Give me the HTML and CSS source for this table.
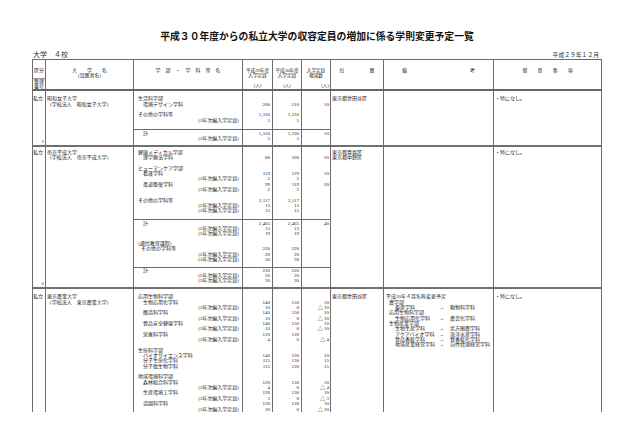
FILE: index.html
```html
<!DOCTYPE html>
<html lang="ja">
<head>
<meta charset="utf-8">
<title>学則変更予定一覧</title>
<link rel="stylesheet" href="styles.css">
</head>
<body>
<div class="page">
  <h1 class="title">平成３０年度からの私立大学の収容定員の増加に係る学則変更予定一覧</h1>
  <div class="meta"><span class="meta-l">大学　４校</span><span class="meta-r">平成２９年１２月</span></div>

  <div class="table">
    <!-- header -->
    <div class="grid head">
      <div class="c kh">
        <div class="kh-top">区分</div>
        <div class="kh-bot"><div>整理</div><div>番号</div></div>
      </div>
      <div class="c hc hc-top"><div class="l">大　　学　　名</div><div class="l">(設置者名)</div></div>
      <div class="c hc hc-top"><div class="l">学　部　・　学　科　等　名</div></div>
      <div class="c hc sm"><div><div class="l">平成29年度</div><div class="l">入学定員</div></div><div class="l">(人)</div></div>
      <div class="c hc sm"><div><div class="l">平成30年度</div><div class="l">入学定員</div></div><div class="l">(人)</div></div>
      <div class="c hc sm"><div><div class="l">入学定員</div><div class="l">増減数</div></div><div class="l unit-r">(人)</div></div>
      <div class="c hc hc-top"><div class="l">位　　　　　置</div></div>
      <div class="c hc bikou-h"><span>備</span><span>考</span></div>
      <div class="c hc hc-top"><div class="l">留　　意　　事　　項</div></div>
    </div>

    <!-- 1: 昭和女子大学 -->
    <div class="grid blk b1">
      <div class="c sp kb pa"><div class="l">私立</div><div class="l no">1</div></div>
      <div class="c sp univ pa"><div class="l">昭和女子大学</div><div class="l in2">(学校法人　昭和女子大学)</div></div>
      <div class="c dept r1 pa">
        <div class="l">生活科学部</div>
        <div class="l in">環境デザイン学科</div>
        <div class="l"></div>
        <div class="l">その他の学科等</div>
        <div class="l r">(3年次編入学定員)</div>
      </div>
      <div class="c num n29 r1 pa"><div class="l"></div><div class="l">200</div><div class="l"></div><div class="l">1,316</div><div class="l">5</div></div>
      <div class="c num n30 r1 pa"><div class="l"></div><div class="l">210</div><div class="l"></div><div class="l">1,316</div><div class="l">5</div></div>
      <div class="c diff r1 pa"><div class="l"></div><div class="l">10</div></div>
      <div class="c sp loc pa"><div class="l">東京都世田谷区</div></div>
      <div class="c sp note pa"></div>
      <div class="c sp memo pa"><div class="l">・特になし。</div></div>

      <div class="c dept r2 sub ps"><div class="l in">計</div><div class="l r">(3年次編入学定員)</div></div>
      <div class="c num n29 r2 sub ps"><div class="l">1,316</div><div class="l">5</div></div>
      <div class="c num n30 r2 sub ps"><div class="l">1,326</div><div class="l">5</div></div>
      <div class="c diff r2 sub ps"><div class="l">10</div></div>
    </div>

    <!-- 2: 帝京平成大学 -->
    <div class="grid blk b2">
      <div class="c sp kb pb"><div class="l">私立</div><div class="l no">2</div></div>
      <div class="c sp univ pb"><div class="l">帝京平成大学</div><div class="l in2">(学校法人　帝京平成大学)</div></div>
      <div class="c dept r1 pb">
        <div class="l">健康メディカル学部</div>
        <div class="l in">理学療法学科</div>
        <div class="l"></div>
        <div class="l">ヒューマンケア学部</div>
        <div class="l in">看護学科</div>
        <div class="l r">(3年次編入学定員)</div>
        <div class="l in">柔道整復学科</div>
        <div class="l r">(3年次編入学定員)</div>
        <div class="l"></div>
        <div class="l">その他の学科等</div>
        <div class="l r">(2年次編入学定員)</div>
        <div class="l r">(3年次編入学定員)</div>
      </div>
      <div class="c num n29 r1 pb"><div class="l"></div><div class="l">80</div><div class="l"></div><div class="l"></div><div class="l">119</div><div class="l">2</div><div class="l">99</div><div class="l">2</div><div class="l"></div><div class="l">2,117</div><div class="l">13</div><div class="l">15</div></div>
      <div class="c num n30 r1 pb"><div class="l"></div><div class="l">100</div><div class="l"></div><div class="l"></div><div class="l">129</div><div class="l">2</div><div class="l">119</div><div class="l">2</div><div class="l"></div><div class="l">2,117</div><div class="l">13</div><div class="l">15</div></div>
      <div class="c diff r1 pb"><div class="l"></div><div class="l">20</div><div class="l"></div><div class="l"></div><div class="l">10</div><div class="l"></div><div class="l">20</div></div>
      <div class="c sp loc pb"><div class="l">東京都豊島区</div><div class="l">東京都中野区</div></div>
      <div class="c sp note pb"></div>
      <div class="c sp memo pb"><div class="l">・特になし。</div></div>

      <div class="c dept r2 sub ps tight">
        <div class="l in">計</div>
        <div class="l r">(2年次編入学定員)</div>
        <div class="l r">(3年次編入学定員)</div>
        <div class="l"></div>
        <div class="l">(通信教育課程)</div>
        <div class="l in1">その他の学科等</div>
        <div class="l r">(2年次編入学定員)</div>
        <div class="l r">(3年次編入学定員)</div>
      </div>
      <div class="c num n29 r2 sub ps tight"><div class="l">2,465</div><div class="l">13</div><div class="l">19</div><div class="l"></div><div class="l"></div><div class="l">220</div><div class="l">20</div><div class="l">30</div></div>
      <div class="c num n30 r2 sub ps tight"><div class="l">2,465</div><div class="l">13</div><div class="l">19</div><div class="l"></div><div class="l"></div><div class="l">220</div><div class="l">20</div><div class="l">30</div></div>
      <div class="c diff r2 sub ps tight"><div class="l">40</div></div>

      <div class="c dept r3 sub pz tight"><div class="l in">計</div><div class="l r">(2年次編入学定員)</div><div class="l r">(3年次編入学定員)</div></div>
      <div class="c num n29 r3 sub pz tight"><div class="l">220</div><div class="l">20</div><div class="l">30</div></div>
      <div class="c num n30 r3 sub pz tight"><div class="l">220</div><div class="l">20</div><div class="l">30</div></div>
      <div class="c diff r3 sub pz tight"></div>
    </div>

    <!-- 3: 東京農業大学 -->
    <div class="grid blk b3">
      <div class="c sp kb pa"><div class="l">私立</div></div>
      <div class="c sp univ pa"><div class="l">東京農業大学</div><div class="l in2">(学校法人　東京農業大学)</div></div>
      <div class="c dept r1 pa">
        <div class="l">応用生物科学部</div>
        <div class="l in">生物応用化学科</div>
        <div class="l r">(3年次編入学定員)</div>
        <div class="l in">醸造科学科</div>
        <div class="l r">(3年次編入学定員)</div>
        <div class="l in">食品安全健康学科</div>
        <div class="l r">(3年次編入学定員)</div>
        <div class="l in">栄養科学科</div>
        <div class="l r">(3年次編入学定員)</div>
        <div class="l"></div>
        <div class="l">生命科学部</div>
        <div class="l in">バイオサイエンス学科</div>
        <div class="l in">分子生命化学科</div>
        <div class="l in">分子微生物学科</div>
        <div class="l"></div>
        <div class="l">地域環境科学部</div>
        <div class="l in">森林総合科学科</div>
        <div class="l r">(3年次編入学定員)</div>
        <div class="l in">生産環境工学科</div>
        <div class="l r">(3年次編入学定員)</div>
        <div class="l in">造園科学科</div>
        <div class="l r">(3年次編入学定員)</div>
      </div>
      <div class="c num n29 r1 pa"><div class="l"></div><div class="l">140</div><div class="l">10</div><div class="l">140</div><div class="l">10</div><div class="l">140</div><div class="l">10</div><div class="l">120</div><div class="l">4</div><div class="l"></div><div class="l"></div><div class="l">140</div><div class="l">115</div><div class="l">115</div><div class="l"></div><div class="l"></div><div class="l">120</div><div class="l">4</div><div class="l">120</div><div class="l">3</div><div class="l">120</div><div class="l">20</div></div>
      <div class="c num n30 r1 pa"><div class="l"></div><div class="l">150</div><div class="l">0</div><div class="l">150</div><div class="l">0</div><div class="l">150</div><div class="l">0</div><div class="l">120</div><div class="l">0</div><div class="l"></div><div class="l"></div><div class="l">150</div><div class="l">130</div><div class="l">130</div><div class="l"></div><div class="l"></div><div class="l">130</div><div class="l">0</div><div class="l">130</div><div class="l">0</div><div class="l">130</div><div class="l">0</div></div>
      <div class="c diff r1 pa"><div class="l"></div><div class="l">10</div><div class="l">△ 10</div><div class="l">10</div><div class="l">△ 10</div><div class="l">10</div><div class="l">△ 10</div><div class="l"></div><div class="l">△ 4</div><div class="l"></div><div class="l"></div><div class="l">10</div><div class="l">15</div><div class="l">15</div><div class="l"></div><div class="l"></div><div class="l">10</div><div class="l">△ 4</div><div class="l">10</div><div class="l">△ 3</div><div class="l">10</div><div class="l">△ 20</div></div>
      <div class="c sp loc pa"><div class="l">東京都世田谷区</div></div>
      <div class="c sp note pa">
        <div class="l">平成30年４月名称変更予定</div>
        <div class="l fac">農学部</div>
        <div class="l map"><span class="old">畜産学科</span><span class="ar">→</span><span>動物科学科</span></div>
        <div class="l fac">応用生物科学部</div>
        <div class="l map"><span class="old">生物応用化学科</span><span class="ar">→</span><span>農芸化学科</span></div>
        <div class="l fac">生物産業学部</div>
        <div class="l map"><span class="old">生物生産学科</span><span class="ar">→</span><span>北方圏農学科</span></div>
        <div class="l map"><span class="old">アクアバイオ学科</span><span class="ar">→</span><span>海洋水産学科</span></div>
        <div class="l map"><span class="old">食品香粧学科</span><span class="ar">→</span><span>食香粧化学科</span></div>
        <div class="l map"><span class="old">地域産業経営学科</span><span class="ar">→</span><span>自然資源経営学科</span></div>
      </div>
      <div class="c sp memo pa"><div class="l">・特になし。</div></div>
    </div>
  </div>
</div>
</body>
</html>
```

FILE: styles.css
```css
* { box-sizing: border-box; margin: 0; padding: 0; }

html, body { background: #ffffff; }

body {
  font-family: "Liberation Serif", "Noto Sans CJK JP", serif;
  color: #262626;
  overflow: hidden;
}

.page {
  width: 570px;
  margin-left: 32px;
  padding-top: 30px;
}

.title {
  font: 700 9.8px/12px "Noto Sans CJK JP", sans-serif;
  color: #111111;
  text-align: center;
}

.meta {
  display: flex;
  justify-content: space-between;
  align-items: center;
  height: 8px;
  margin-top: 8px;
}

.meta-l { font-size: 7px; padding-left: 1px; font-family: "Noto Sans CJK JP", sans-serif; color: #333; }
.meta-r { font-size: 5.8px; padding-right: 3px; font-family: "Noto Sans CJK JP", sans-serif; color: #333; }

.table {
  margin-top: 1px;
  width: 570px;
  border-top: 1px solid #6c6c6c;
  border-left: 1px solid #6c6c6c;
}

.grid {
  display: grid;
  grid-template-columns: 13px 88px 109px 30px 29px 29px 53px 110px 108px;
}

.c {
  --lh: 5.35px;
  border-right: 1px solid #6c6c6c;
  font-size: 5px;
  min-width: 0;
  overflow: hidden;
}

.l {
  height: var(--lh);
  line-height: var(--lh);
  white-space: nowrap;
}

/* header */
.head {
  grid-template-rows: 29px;
  border-bottom: 2px solid #666666;
}

.kh { display: flex; flex-direction: column; }
.kh-top {
  height: 20px;
  padding-top: 8px;
  line-height: 5.35px;
  text-align: center;
  border-bottom: 1px solid #9a9a9a;
}
.kh-bot { text-align: center; line-height: 5px; }

.hc {
  display: flex;
  flex-direction: column;
  justify-content: space-between;
  align-items: center;
  padding-top: 8px;
  padding-bottom: 1px;
  text-align: center;
}
.hc-top { justify-content: flex-start; }
.hc.sm { font-size: 4.6px; }
.unit-r { align-self: flex-end; padding-right: 1px; }

.bikou-h {
  flex-direction: row;
  justify-content: space-between;
  align-items: flex-start;
  padding: 8px 18px 0;
  line-height: 5.35px;
}

/* body blocks */
.blk { border-bottom: 2px solid #707070; }
.b1 { grid-template-rows: 38px 16px; }
.b2 { grid-template-rows: 72px 48px 20px; }
.b3 { grid-template-rows: 123px; border-bottom: 0; }

/* column placement */
.kb   { grid-column: 1; }
.univ { grid-column: 2; }
.dept { grid-column: 3; }
.n29  { grid-column: 4; }
.n30  { grid-column: 5; }
.diff { grid-column: 6; }
.loc  { grid-column: 7; }
.note { grid-column: 8; }
.memo { grid-column: 9; }

/* row placement */
.sp { grid-row: 1 / -1; }
.r1 { grid-row: 1; }
.r2 { grid-row: 2; }
.r3 { grid-row: 3; }
.sub { border-top: 1px solid #6c6c6c; }

.pa { padding-top: 5.3px; }
.pb { padding-top: 2.6px; }
.ps { padding-top: 0.5px; }
.pz { padding-top: 0; }
.tight { --lh: 5.2px; }

.kb {
  display: flex;
  flex-direction: column;
  justify-content: space-between;
  padding-bottom: 0.3px;
}
.no { text-align: right; padding-right: 1px; }

.univ { padding-left: 1px; }
.in2 { padding-left: 3px; }

.dept { padding-left: 4px; padding-right: 3px; }
.in { padding-left: 5px; }
.in1 { padding-left: 3px; }
.r { text-align: right; }

.num { text-align: right; padding-right: 2px; }
.diff { text-align: right; padding-right: 1px; }

.loc { padding-left: 1px; }
.note { padding-left: 2px; }
.memo { padding-left: 1px; }

.fac { padding-left: 3px; }
.map { display: flex; padding-left: 9px; }
.map .old { width: 44px; }
.map .ar { width: 11px; }
```
